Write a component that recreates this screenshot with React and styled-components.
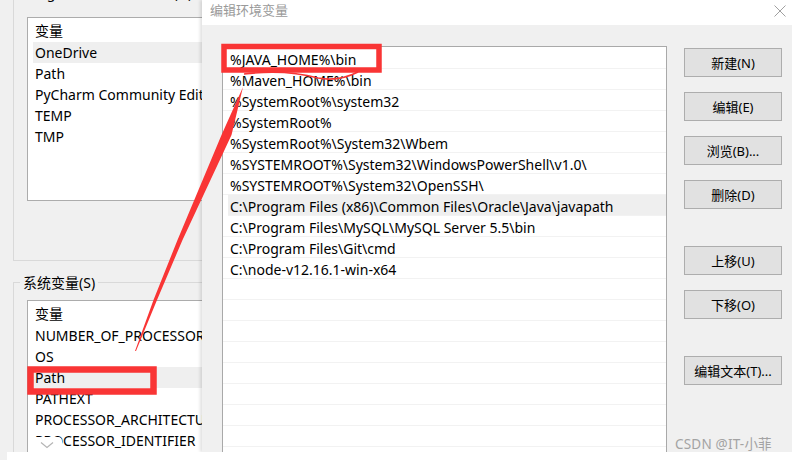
import React from "react";
import styled, { createGlobalStyle } from "styled-components";

const GlobalStyle = createGlobalStyle`
  html, body { margin: 0; padding: 0; background: #ffffff; }
  body { font-family: "Noto Sans", "Noto Sans CJK SC", sans-serif; }
`;

const Screen = styled.div`
  position: relative;
  width: 792px;
  height: 460px;
  overflow: hidden;
  display: flex;
  flex-direction: column;
  background: #f0f0f0;
  color: #000;
  font-size: 14px;
`;

const Main = styled.div`
  display: flex;
  height: 452px;
  overflow: hidden;
`;

const BottomStrip = styled.div`
  height: 8px;
  margin-left: 7px;
  background: #ffffff;
`;

/* ---------- background window (环境变量) ---------- */
const BackWindow = styled.div`
  width: 202px;
  flex: none;
  overflow: hidden;
  padding-left: 13px;
  box-sizing: border-box;
  background: #f0f0f0;
`;

const Group = styled.div`
  width: 260px;
  border: 1px solid #d9d9d9;
  margin-top: ${(p) => p.$top}px;
  padding-bottom: ${(p) => p.$bottom}px;
`;

const GroupLabel = styled.div`
  width: fit-content;
  margin: -9px 0 0 6px;
  padding: 0 3px;
  height: 18px;
  line-height: 18px;
  background: #f0f0f0;
  white-space: nowrap;
  font-size: 14px;
`;

const VarList = styled.div`
  margin: ${(p) => p.$gap}px 0 0 13px;
  height: ${(p) => p.$height}px;
  border: 1px solid #acacac;
  background: #ffffff;
  overflow: hidden;
`;

const VarHeader = styled.div`
  height: 24px;
  line-height: 26px;
  padding-left: 7px;
  white-space: nowrap;
`;

const VarRow = styled.div`
  height: 21px;
  line-height: 21px;
  margin-left: 5px;
  padding-left: 2px;
  white-space: nowrap;
  background: ${(p) => (p.$selected ? "#efefef" : "transparent")};
`;

/* ---------- dialog (编辑环境变量) ---------- */
const Dialog = styled.div`
  flex: 1;
  display: flex;
  flex-direction: column;
  background: #f0f0f0;
  box-shadow: -2px 0 3px rgba(0, 0, 0, 0.12);
  z-index: 1;
`;

const TitleBar = styled.div`
  height: 25px;
  flex: none;
  display: flex;
  align-items: center;
  justify-content: space-between;
  padding: 0 5px 6px 8px;
  box-sizing: border-box;
  background: #ffffff;
  color: #9a9a9a;
  font-size: 13px;
`;

const CloseIcon = styled.svg`
  width: 12px;
  height: 12px;
  margin-right: 1px;
  margin-top: 3px;
`;

const Body = styled.div`
  flex: 1;
  display: flex;
  gap: 17px;
  padding: 21px 10px 0 20px;
  min-height: 0;
`;

const PathList = styled.div`
  width: 443px;
  flex: none;
  border: 1px solid #a9a9a9;
  border-bottom: none;
  background: #ffffff;
  overflow: hidden;
  padding-top: 1px;
`;

const PathRow = styled.div`
  height: 21px;
  box-sizing: border-box;
  padding-top: 3px;
  line-height: 17px;
  padding-left: ${(p) => (p.$selected ? 2 : 7)}px;
  margin-left: ${(p) => (p.$selected ? 5 : 0)}px;
  border-bottom: 1px solid #f2f2f2;
  white-space: nowrap;
  background: ${(p) => (p.$selected ? "#efefef" : "#ffffff")};
`;

const ButtonCol = styled.div`
  display: flex;
  flex-direction: column;
  padding-top: 2px;
  width: 98px;
`;

const Button = styled.div`
  height: 29px;
  box-sizing: border-box;
  margin-top: ${(p) => p.$gap}px;
  border: 1px solid #adadad;
  background: #e1e1e1;
  display: flex;
  align-items: center;
  justify-content: center;
  font-size: 13px;
  white-space: nowrap;
`;

/* ---------- overlays ---------- */
const Annotation = styled.svg`
  position: absolute;
  left: 0;
  top: 0;
  width: 792px;
  height: 460px;
  pointer-events: none;
  z-index: 3;
`;

const Watermark = styled.div`
  position: absolute;
  left: 675px;
  top: 433px;
  font-size: 13.5px;
  color: #a3a3a3;
  letter-spacing: 0.2px;
  z-index: 2;
  white-space: nowrap;
`;

const ChevronTab = styled.div`
  position: absolute;
  left: 32px;
  top: 437px;
  width: 30px;
  height: 16px;
  border-radius: 4px 4px 0 0;
  background: #ffffff;
  display: flex;
  align-items: center;
  justify-content: center;
  z-index: 2;
`;

const userVars = ["OneDrive", "Path", "PyCharm Community Edition", "TEMP", "TMP"];
const sysVars = [
  "NUMBER_OF_PROCESSORS",
  "OS",
  "Path",
  "PATHEXT",
  "PROCESSOR_ARCHITECTURE",
  "PROCESSOR_IDENTIFIER",
  "PROCESSOR_LEVEL",
];
const paths = [
  "%JAVA_HOME%\\bin",
  "%Maven_HOME%\\bin",
  "%SystemRoot%\\system32",
  "%SystemRoot%",
  "%SystemRoot%\\System32\\Wbem",
  "%SYSTEMROOT%\\System32\\WindowsPowerShell\\v1.0\\",
  "%SYSTEMROOT%\\System32\\OpenSSH\\",
  "C:\\Program Files (x86)\\Common Files\\Oracle\\Java\\javapath",
  "C:\\Program Files\\MySQL\\MySQL Server 5.5\\bin",
  "C:\\Program Files\\Git\\cmd",
  "C:\\node-v12.16.1-win-x64",
  "", "", "", "", "", "", "", "", "",
];
const buttons = [
  ["新建(N)", 0],
  ["编辑(E)", 15],
  ["浏览(B)...", 15],
  ["删除(D)", 15],
  ["上移(U)", 37],
  ["下移(O)", 15],
  ["编辑文本(T)...", 37],
];

export default function App() {
  return (
    <>
      <GlobalStyle />
      <Screen>
        <Main>
          <BackWindow>
            <Group $top={-8} $bottom={59}>
              <GroupLabel>Langmenxx 的用户变量(U)</GroupLabel>
              <VarList $gap={15} $height={182}>
                <VarHeader>变量</VarHeader>
                {userVars.map((v, i) => (
                  <VarRow key={v} $selected={i === 0}>{v}</VarRow>
                ))}
              </VarList>
            </Group>
            <Group $top={21} $bottom={0}>
              <GroupLabel>系统变量(S)</GroupLabel>
              <VarList $gap={8} $height={200}>
                <VarHeader>变量</VarHeader>
                {sysVars.map((v, i) => (
                  <VarRow key={v} $selected={i === 2}>{v}</VarRow>
                ))}
              </VarList>
            </Group>
          </BackWindow>
          <Dialog>
            <TitleBar>
              <span>编辑环境变量</span>
              <CloseIcon viewBox="0 0 12 12">
                <path d="M0.5 0.5 L11.5 11.5 M11.5 0.5 L0.5 11.5" stroke="#a0a0a0" strokeWidth="1" fill="none" />
              </CloseIcon>
            </TitleBar>
            <Body>
              <PathList>
                {paths.map((p, i) => (
                  <PathRow key={i} $selected={i === 7}>{p}</PathRow>
                ))}
              </PathList>
              <ButtonCol>
                {buttons.map(([t, g]) => (
                  <Button key={t} $gap={g}>{t}</Button>
                ))}
              </ButtonCol>
            </Body>
          </Dialog>
        </Main>
        <BottomStrip />
        <Watermark>CSDN @IT-小菲</Watermark>
        <ChevronTab>
          <svg width="14" height="8" viewBox="0 0 14 8">
            <path d="M1 1.5 L7 6.5 L13 1.5" stroke="#b5b5b5" strokeWidth="1.2" fill="none" />
          </svg>
        </ChevronTab>
        <Annotation viewBox="0 0 792 460">
          <rect x="224" y="46.5" width="155" height="23.5" fill="none" stroke="#f93535" strokeWidth="5.5" />
          <rect x="30.5" y="369.5" width="123" height="22" fill="none" stroke="#f93535" strokeWidth="6.5" />
          <polygon
            points="135,351 153.5,300 177.5,240 221.5,135 243,87 231.5,135 182.5,240 157,300 136,351"
            fill="#f93535"
          />
          <path d="M244 74 Q 285 69 318 78 Q 338 82 358 72" stroke="#f93535" strokeWidth="1.6" fill="none" />
        </Annotation>
      </Screen>
    </>
  );
}
